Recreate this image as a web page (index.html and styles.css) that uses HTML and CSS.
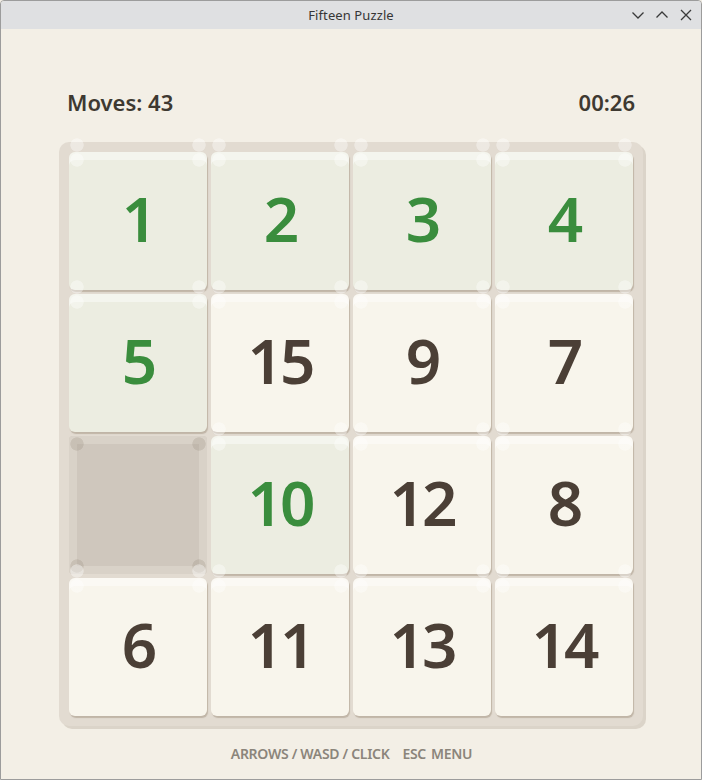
FILE: index.html
```html
<!DOCTYPE html>
<html lang="en">
<head>
<meta charset="utf-8">
<title>Fifteen Puzzle</title>
<link rel="stylesheet" href="styles.css">
</head>
<body>
<div class="window">
  <div class="titlebar">
    <span class="title">Fifteen Puzzle</span>
    <div class="controls">
      <svg class="ctl" width="14" height="14" viewBox="0 0 14 14"><path d="M1.5 4.5 L7 10 L12.5 4.5" fill="none" stroke="#3a3a3a" stroke-width="1.3"/></svg>
      <svg class="ctl" width="14" height="14" viewBox="0 0 14 14"><path d="M1.5 9.5 L7 4 L12.5 9.5" fill="none" stroke="#3a3a3a" stroke-width="1.3"/></svg>
      <svg class="ctl" width="14" height="14" viewBox="0 0 14 14"><path d="M2 2 L12 12 M12 2 L2 12" fill="none" stroke="#3a3a3a" stroke-width="1.3"/></svg>
    </div>
  </div>
  <div class="content">
    <div class="header">
      <span class="moves">Moves: 43</span>
      <span class="timer">00:26</span>
    </div>
    <div class="board">
      <div class="tile ok">1</div>
      <div class="tile ok">2</div>
      <div class="tile ok">3</div>
      <div class="tile ok">4</div>
      <div class="tile ok">5</div>
      <div class="tile">15</div>
      <div class="tile">9</div>
      <div class="tile">7</div>
      <div class="empty"></div>
      <div class="tile ok">10</div>
      <div class="tile">12</div>
      <div class="tile">8</div>
      <div class="tile">6</div>
      <div class="tile">11</div>
      <div class="tile">13</div>
      <div class="tile">14</div>
    </div>
    <div class="footer">
      <span>ARROWS / WASD / CLICK</span>
      <span class="sep">ESC</span>
      <span>MENU</span>
    </div>
  </div>
</div>
</body>
</html>
```

FILE: styles.css
```css
* { box-sizing: border-box; }
html, body { margin: 0; padding: 0; }
body {
  width: 702px;
  height: 780px;
  font-family: "Noto Sans", "Open Sans", sans-serif;
  background: #f3efe6;
}
.window {
  width: 702px;
  height: 780px;
  border: 1px solid #9c9c9c;
  border-radius: 4px 4px 0 0;
  display: flex;
  flex-direction: column;
  overflow: hidden;
}
.titlebar {
  height: 28px;
  flex: none;
  background: #dfe0e2;
  position: relative;
  display: flex;
  align-items: center;
  justify-content: center;
}
.title {
  font-size: 13px;
  color: #363636;
  letter-spacing: 0.1px;
}
.controls {
  position: absolute;
  right: 8px;
  top: 7px;
  display: flex;
  gap: 10px;
}
.ctl { display: block; }
.content {
  flex: 1;
  background: #f3efe6;
  padding: 60px 57px 0 58px;
  display: flex;
  flex-direction: column;
}
.header {
  display: flex;
  justify-content: space-between;
  padding: 0 9px 0 8px;
  height: 26px;
  line-height: 26px;
  font-size: 22px;
  font-weight: 600;
  color: #3e3931;
}
.board {
  margin-top: 27px;
  width: 584px;
  height: 584px;
  padding: 10px;
  background: #e2dbd1;
  border-radius: 10px;
  box-shadow: 3px 3px 0 #dbd4c9;
  display: grid;
  grid-template-columns: repeat(4, 138px);
  grid-template-rows: repeat(4, 138px);
  gap: 4px;
}
.tile {
  position: relative;
  border-radius: 6px;
  background: #f8f5ec;
  box-shadow: inset 0 8px 0 rgba(255, 255, 255, 0.45), 1px 2px 1px rgba(150, 135, 115, 0.45);
  display: flex;
  align-items: center;
  justify-content: center;
  padding-bottom: 7px;
  font-size: 62px;
  line-height: 1;
  font-weight: 600;
  letter-spacing: -3px;
  color: #4b3f36;
}
.tile.ok {
  background: #ecede1;
  color: #3a8d3d;
}
.tile::before {
  content: "";
  position: absolute;
  left: 0;
  right: 0;
  top: -14px;
  height: 29px;
  pointer-events: none;
  background:
    radial-gradient(circle 7px at 8px 7px, rgba(255,255,255,0.38) 90%, rgba(255,255,255,0) 100%),
    radial-gradient(circle 7px at 8px 22px, rgba(255,255,255,0.38) 90%, rgba(255,255,255,0) 100%),
    radial-gradient(circle 7px at calc(100% - 8px) 7px, rgba(255,255,255,0.38) 90%, rgba(255,255,255,0) 100%),
    radial-gradient(circle 7px at calc(100% - 8px) 22px, rgba(255,255,255,0.38) 90%, rgba(255,255,255,0) 100%);
}
.empty {
  position: relative;
  border-radius: 4px;
  background: #cfc7bd;
  box-shadow: inset 0 0 0 8px #d9d2c8;
}
.empty::before {
  content: "";
  position: absolute;
  inset: 0;
  pointer-events: none;
  background:
    radial-gradient(circle 7px at 8px 8px, rgba(140,128,112,0.22) 90%, rgba(140,128,112,0) 100%),
    radial-gradient(circle 7px at calc(100% - 8px) 8px, rgba(140,128,112,0.22) 90%, rgba(140,128,112,0) 100%),
    radial-gradient(circle 7px at 8px calc(100% - 8px), rgba(140,128,112,0.22) 90%, rgba(140,128,112,0) 100%),
    radial-gradient(circle 7px at calc(100% - 8px) calc(100% - 8px), rgba(140,128,112,0.22) 90%, rgba(140,128,112,0) 100%);
}
.footer {
  margin-top: 19px;
  display: flex;
  justify-content: center;
  gap: 5px;
  font-size: 14px;
  line-height: 18px;
  font-weight: 600;
  color: #8b857b;
  letter-spacing: -0.3px;
}
.footer .sep { margin-left: 8px; }
```
